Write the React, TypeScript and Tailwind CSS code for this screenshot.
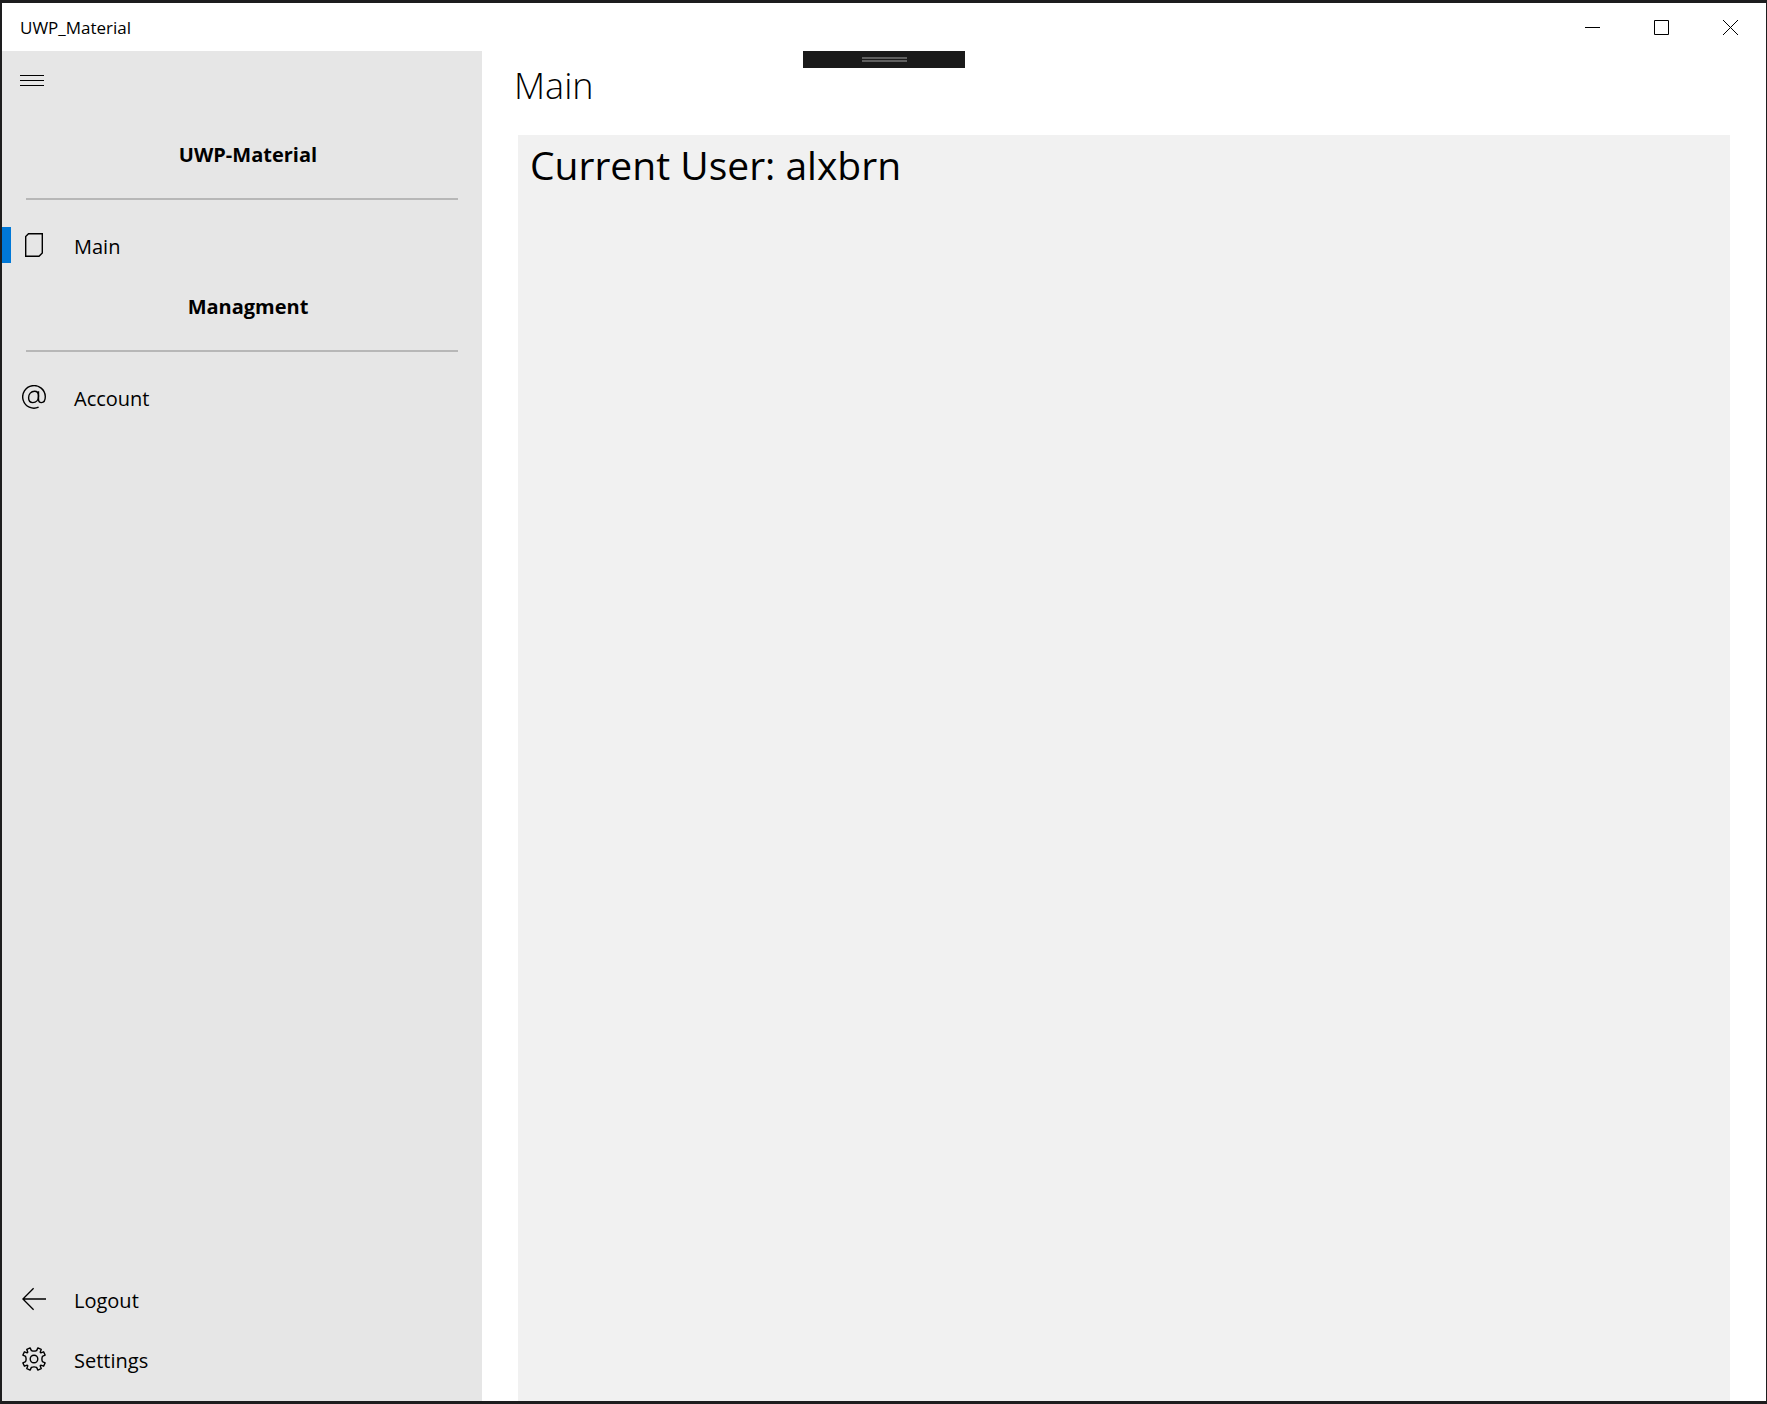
import React from "react";

const fontStack = "font-['Segoe_UI','Open_Sans','Noto_Sans',sans-serif]";

function PageIcon() {
  return (
    <svg width="24" height="24" viewBox="0 0 24 24" fill="none" stroke="#000" strokeWidth="1.4" aria-hidden="true">
      <path d="M6.5.7H20.3V20L17 23.3H3.7V3.5z" />
    </svg>
  );
}

function AtIcon() {
  return (
    <svg width="24" height="24" viewBox="0 0 24 24" fill="none" stroke="#000" strokeWidth="1.4" aria-hidden="true">
      <path d="M16.6 22.2A11.3 11.3 0 1 1 23.3 11.5C23.3 15.5 21.8 17.6 19.4 17.6C17.4 17.6 16.5 16.2 16.5 14V6.2" />
      <path d="M16.5 11C16.5 8 15.1 6.3 12.6 6.3C9 6.3 6.6 9 6.6 12.8C6.6 15.7 8.2 17.6 10.8 17.6C14.2 17.6 16.5 14.8 16.5 11z" />
    </svg>
  );
}

function BackIcon() {
  return (
    <svg width="24" height="24" viewBox="0 0 24 24" fill="none" stroke="#000" strokeWidth="1.3" aria-hidden="true">
      <path d="M24 12H1M11.6 1.2L.9 12L11.6 22.8" />
    </svg>
  );
}

function GearIcon() {
  return (
    <svg width="24" height="24" viewBox="0 0 24 24" fill="none" stroke="#000" strokeWidth="1.4" strokeLinejoin="round" aria-hidden="true">
      <circle cx="12" cy="12" r="3.8" />
      <path d="M8.1.9L9.4 3.6Q12 4.6 14.6 3.6L15.9.9L19.2 2.4L18.2 5.2Q18.6 5.5 18.8 5.8L21.6 4.8L23.1 8.1L20.4 9.4Q19.4 12 20.4 14.6L23.1 15.9L21.6 19.2L18.8 18.2Q18.5 18.6 18.2 18.8L19.2 21.6L15.9 23.1L14.6 20.4Q12 19.4 9.4 20.4L8.1 23.1L4.8 21.6L5.8 18.8Q5.4 18.5 5.2 18.2L2.4 19.2L.9 15.9L3.6 14.6Q4.6 12 3.6 9.4L.9 8.1L2.4 4.8L5.2 5.8Q5.5 5.4 5.8 5.2L4.8 2.4z" />
    </svg>
  );
}

function NavItem({ icon, label, selected = false }: { icon: React.ReactNode; label: string; selected?: boolean }) {
  return (
    <li>
      <button type="button" aria-current={selected ? "page" : undefined} className="flex h-15 w-full items-center text-left">
        <span className={selected ? "h-9 w-[9px] bg-[#0078d7]" : "h-9 w-[9px]"} />
        <span className="ml-[11px]">{icon}</span>
        <span className="ml-7 pt-1 text-[20px] leading-7">{label}</span>
      </button>
    </li>
  );
}

function NavHeader({ children }: { children: string }) {
  return (
    <li>
      <h2 className="flex h-15 items-center justify-center pt-1 pl-3 text-[20px] leading-7 font-bold">{children}</h2>
      <hr className="mx-6 mt-[15px] mb-[15px] border-t-2 border-[#b7b7b7]" />
    </li>
  );
}

export default function App() {
  return (
    <div className={`flex min-h-screen flex-col border-y-3 border-r border-l-2 border-[#1d1d1e] bg-white text-black ${fontStack}`}>
      <header className="flex h-12 items-center">
        <span className="ml-[18px] pt-0.5 text-[17px] leading-6">UWP_Material</span>
        <div className="mr-px ml-auto flex h-full">
          <button type="button" aria-label="Minimize" className="flex w-[69px] items-center justify-center">
            <svg width="15" height="15" viewBox="0 0 15 15" stroke="#000" aria-hidden="true"><path d="M0 7.5H15" /></svg>
          </button>
          <button type="button" aria-label="Maximize" className="flex w-[69px] items-center justify-center">
            <svg width="15" height="15" viewBox="0 0 15 15" fill="none" stroke="#000" aria-hidden="true"><path d="M.5.5H14.5V14.5H.5z" /></svg>
          </button>
          <button type="button" aria-label="Close" className="flex w-[69px] items-center justify-center">
            <svg width="15" height="15" viewBox="0 0 15 15" stroke="#000" aria-hidden="true"><path d="M0 0L15 15M15 0L0 15" /></svg>
          </button>
        </div>
      </header>

      <div className="relative flex flex-1">
        <nav className="flex w-120 shrink-0 flex-col bg-[#e6e6e6] pb-3">
          <button type="button" aria-label="Toggle navigation" className="flex h-15 w-15 items-center justify-center">
            <svg width="24" height="12" viewBox="0 0 24 12" stroke="#000" aria-hidden="true"><path d="M0 .5H24M0 5.5H24M0 10.5H24" /></svg>
          </button>
          <ul className="mt-3">
            <NavHeader>UWP-Material</NavHeader>
            <NavItem icon={<PageIcon />} label="Main" selected />
            <NavHeader>Managment</NavHeader>
            <NavItem icon={<AtIcon />} label="Account" />
          </ul>
          <ul className="mt-auto">
            <NavItem icon={<BackIcon />} label="Logout" />
            <NavItem icon={<GearIcon />} label="Settings" />
          </ul>
        </nav>

        <main className="flex min-w-0 flex-1 flex-col px-9">
          <h1 className="-ml-1 h-21 pt-2.5 text-[36px] leading-[50px] font-light">Main</h1>
          <section className="flex-1 bg-[#f1f1f1] px-3">
            <p className="text-[39px] leading-[60px]">Current User: alxbrn</p>
          </section>
        </main>

        <div className="absolute top-0 left-1/2 flex h-[17px] w-[162px] -translate-x-1/2 flex-col items-center justify-center gap-px bg-[#1a1a1a]">
          <span className="h-0.5 w-[45px] bg-[#606060]" />
          <span className="h-0.5 w-[45px] bg-[#606060]" />
        </div>
      </div>
    </div>
  );
}
